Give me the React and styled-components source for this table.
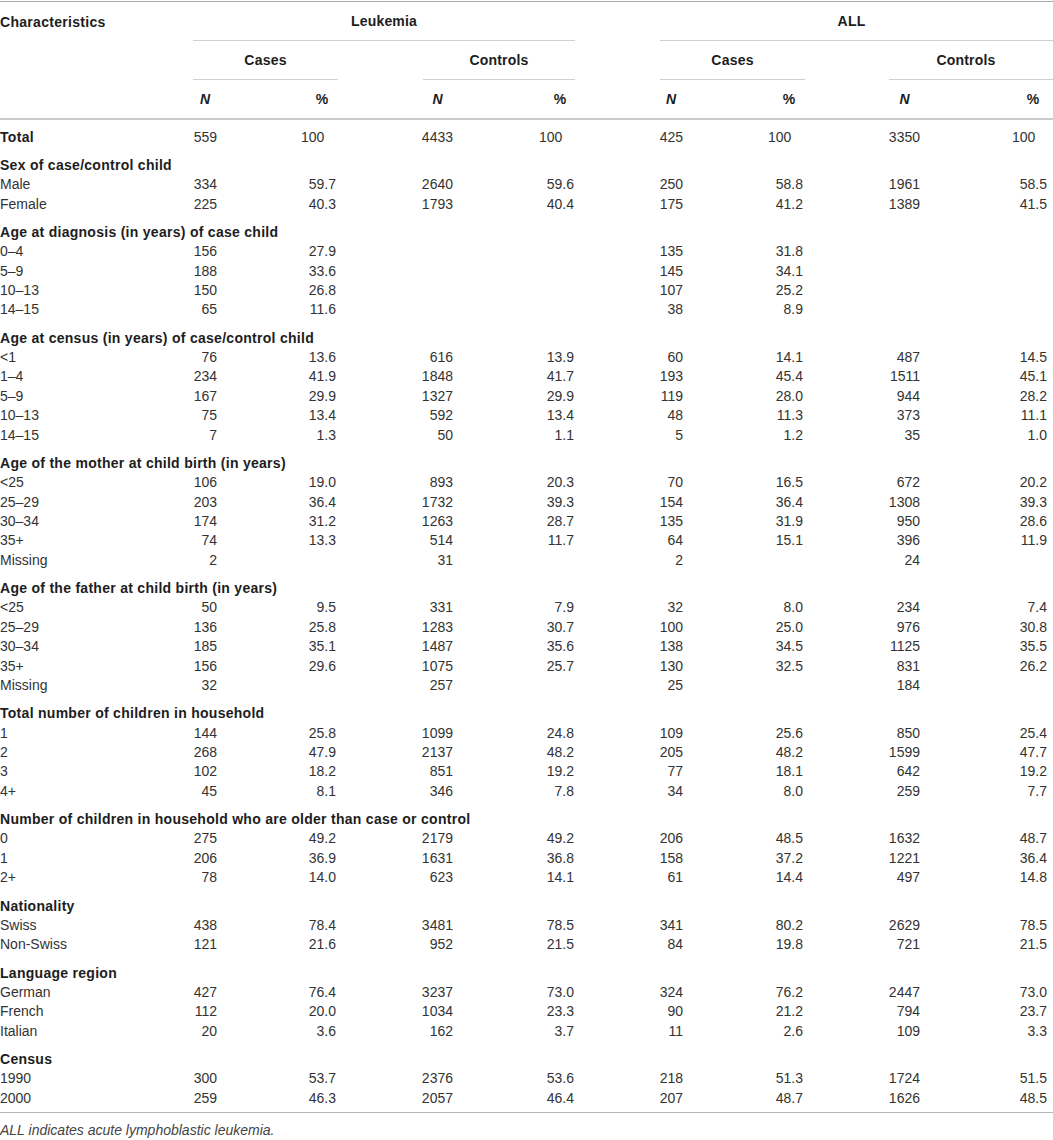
import React from "react";
import styled, { createGlobalStyle } from "styled-components";

const GlobalStyle = createGlobalStyle`
  html, body {
    margin: 0;
    padding: 0;
    background: #fff;
  }
  body {
    font-family: "Liberation Sans", Arial, Helvetica, sans-serif;
    color: #333;
  }
`;

// column widths, right padding of the numbers, and width of the number box
const COLS = [
  { w: 193 },
  { w: 72, pr: 48, box: 24 },
  { w: 73, pr: 2, box: 28 },
  { w: 162, pr: 47, box: 31 },
  { w: 75, pr: 1, box: 28 },
  { w: 145, pr: 37, box: 24 },
  { w: 85, pr: 2, box: 28 },
  { w: 155, pr: 40, box: 31 },
  { w: 93, pr: 6, box: 28 },
];

const TOP_GROUPS = [
  { label: "Leukemia", span: 4, inset: 0, tail: 0 },
  { label: "ALL", span: 4, inset: 85, tail: 10 },
];

const SUB_GROUPS = [
  { label: "Cases", span: 2, inset: 0, tail: 0 },
  { label: "Controls", span: 2, inset: 85, tail: 0 },
  { label: "Cases", span: 2, inset: 85, tail: 0 },
  { label: "Controls", span: 2, inset: 84, tail: 10 },
];

const TOTAL = ["Total", "559", "100", "4433", "100", "425", "100", "3350", "100"];

const SECTIONS = [
  {
    title: "Sex of case/control child",
    rows: [
      ["Male", "334", "59.7", "2640", "59.6", "250", "58.8", "1961", "58.5"],
      ["Female", "225", "40.3", "1793", "40.4", "175", "41.2", "1389", "41.5"],
    ],
  },
  {
    title: "Age at diagnosis (in years) of case child",
    rows: [
      ["0–4", "156", "27.9", "", "", "135", "31.8", "", ""],
      ["5–9", "188", "33.6", "", "", "145", "34.1", "", ""],
      ["10–13", "150", "26.8", "", "", "107", "25.2", "", ""],
      ["14–15", "65", "11.6", "", "", "38", "8.9", "", ""],
    ],
  },
  {
    title: "Age at census (in years) of case/control child",
    rows: [
      ["<1", "76", "13.6", "616", "13.9", "60", "14.1", "487", "14.5"],
      ["1–4", "234", "41.9", "1848", "41.7", "193", "45.4", "1511", "45.1"],
      ["5–9", "167", "29.9", "1327", "29.9", "119", "28.0", "944", "28.2"],
      ["10–13", "75", "13.4", "592", "13.4", "48", "11.3", "373", "11.1"],
      ["14–15", "7", "1.3", "50", "1.1", "5", "1.2", "35", "1.0"],
    ],
  },
  {
    title: "Age of the mother at child birth (in years)",
    rows: [
      ["<25", "106", "19.0", "893", "20.3", "70", "16.5", "672", "20.2"],
      ["25–29", "203", "36.4", "1732", "39.3", "154", "36.4", "1308", "39.3"],
      ["30–34", "174", "31.2", "1263", "28.7", "135", "31.9", "950", "28.6"],
      ["35+", "74", "13.3", "514", "11.7", "64", "15.1", "396", "11.9"],
      ["Missing", "2", "", "31", "", "2", "", "24", ""],
    ],
  },
  {
    title: "Age of the father at child birth (in years)",
    rows: [
      ["<25", "50", "9.5", "331", "7.9", "32", "8.0", "234", "7.4"],
      ["25–29", "136", "25.8", "1283", "30.7", "100", "25.0", "976", "30.8"],
      ["30–34", "185", "35.1", "1487", "35.6", "138", "34.5", "1125", "35.5"],
      ["35+", "156", "29.6", "1075", "25.7", "130", "32.5", "831", "26.2"],
      ["Missing", "32", "", "257", "", "25", "", "184", ""],
    ],
  },
  {
    title: "Total number of children in household",
    rows: [
      ["1", "144", "25.8", "1099", "24.8", "109", "25.6", "850", "25.4"],
      ["2", "268", "47.9", "2137", "48.2", "205", "48.2", "1599", "47.7"],
      ["3", "102", "18.2", "851", "19.2", "77", "18.1", "642", "19.2"],
      ["4+", "45", "8.1", "346", "7.8", "34", "8.0", "259", "7.7"],
    ],
  },
  {
    title: "Number of children in household who are older than case or control",
    rows: [
      ["0", "275", "49.2", "2179", "49.2", "206", "48.5", "1632", "48.7"],
      ["1", "206", "36.9", "1631", "36.8", "158", "37.2", "1221", "36.4"],
      ["2+", "78", "14.0", "623", "14.1", "61", "14.4", "497", "14.8"],
    ],
  },
  {
    title: "Nationality",
    rows: [
      ["Swiss", "438", "78.4", "3481", "78.5", "341", "80.2", "2629", "78.5"],
      ["Non-Swiss", "121", "21.6", "952", "21.5", "84", "19.8", "721", "21.5"],
    ],
  },
  {
    title: "Language region",
    rows: [
      ["German", "427", "76.4", "3237", "73.0", "324", "76.2", "2447", "73.0"],
      ["French", "112", "20.0", "1034", "23.3", "90", "21.2", "794", "23.7"],
      ["Italian", "20", "3.6", "162", "3.7", "11", "2.6", "109", "3.3"],
    ],
  },
  {
    title: "Census",
    rows: [
      ["1990", "300", "53.7", "2376", "53.6", "218", "51.3", "1724", "51.5"],
      ["2000", "259", "46.3", "2057", "46.4", "207", "48.7", "1626", "48.5"],
    ],
  },
];

function Value({ v, pct }) {
  if (pct && v && !v.includes(".")) return <Whole>{v}</Whole>;
  return v;
}

function DataRow({ row, bold, first, last }) {
  return (
    <tr>
      <Label $bold={bold} $first={first} $last={last}>
        {row[0]}
      </Label>
      {row.slice(1).map((v, i) => (
        <Num key={i} $pr={COLS[i + 1].pr} $first={first} $last={last}>
          <Value v={v} pct={i % 2 === 1} />
        </Num>
      ))}
    </tr>
  );
}

export default function App() {
  const lastSection = SECTIONS.length - 1;
  return (
    <Page>
      <GlobalStyle />
      <Table>
        <colgroup>
          {COLS.map((c, i) => (
            <Col key={i} $w={c.w} />
          ))}
        </colgroup>
        <thead>
          <tr>
            <CornerTh>Characteristics</CornerTh>
            {TOP_GROUPS.map((g) => (
              <GroupTh key={g.label} colSpan={g.span}>
                <Group $inset={g.inset} $tail={g.tail}>
                  {g.label}
                </Group>
              </GroupTh>
            ))}
          </tr>
          <tr>
            <CornerTh />
            {SUB_GROUPS.map((g, i) => (
              <GroupTh key={i} colSpan={g.span}>
                <Group $inset={g.inset} $tail={g.tail}>
                  {g.label}
                </Group>
              </GroupTh>
            ))}
          </tr>
          <tr>
            <StatTh />
            {COLS.slice(1).map((c, i) => (
              <StatTh key={i} $pr={c.pr}>
                <StatBox $w={c.box}>{i % 2 === 0 ? <Italic>N</Italic> : "%"}</StatBox>
              </StatTh>
            ))}
          </tr>
        </thead>
        <tbody>
          <DataRow row={TOTAL} bold first />
          {SECTIONS.map((s, si) => (
            <React.Fragment key={s.title}>
              <tr>
                <SectionTh colSpan={9}>{s.title}</SectionTh>
              </tr>
              {s.rows.map((r, ri) => (
                <DataRow
                  key={ri}
                  row={r}
                  last={si === lastSection && ri === s.rows.length - 1}
                />
              ))}
            </React.Fragment>
          ))}
        </tbody>
      </Table>
      <Note>ALL indicates acute lymphoblastic leukemia.</Note>
    </Page>
  );
}

const Page = styled.div`
  width: 1053px;
  padding-top: 1px;
  font-size: 14px;
`;

const Table = styled.table`
  width: 1053px;
  table-layout: fixed;
  border-collapse: separate;
  border-spacing: 0;
  border-top: 1px solid #a9a9a9;
`;

const Col = styled.col`
  width: ${(p) => p.$w}px;
`;

const CornerTh = styled.th`
  padding: 0;
  text-align: left;
  vertical-align: middle;
  font-weight: bold;
  letter-spacing: 0.3px;
  color: #1d1d1d;
`;

const GroupTh = styled.th`
  padding: 0;
  font-weight: bold;
  letter-spacing: 0.2px;
  color: #1d1d1d;
`;

const Group = styled.div`
  height: 38px;
  margin-left: ${(p) => p.$inset}px;
  padding-right: ${(p) => p.$tail}px;
  display: flex;
  align-items: center;
  justify-content: center;
  border-bottom: 1px solid #cfcfcf;
`;

const StatTh = styled.th`
  height: 38px;
  padding: 0 ${(p) => p.$pr || 0}px 0 0;
  text-align: right;
  font-weight: bold;
  color: #1d1d1d;
  border-bottom: 2px solid #cbcbcb;
`;

const StatBox = styled.span`
  display: inline-block;
  width: ${(p) => p.$w}px;
  text-align: center;
`;

const Italic = styled.i`
  font-style: italic;
`;

const Label = styled.td`
  padding: ${(p) => (p.$first ? "7.5px" : "0")} 0 ${(p) => (p.$last ? "4px" : "0")} 0;
  line-height: 19.4px;
  white-space: nowrap;
  font-weight: ${(p) => (p.$bold ? "bold" : "normal")};
  letter-spacing: ${(p) => (p.$bold ? "0.3px" : "0")};
  color: ${(p) => (p.$bold ? "#1d1d1d" : "#333")};
  border-bottom: ${(p) => (p.$last ? "1px solid #b5b5b5" : "none")};
`;

const Num = styled.td`
  padding: ${(p) => (p.$first ? "7.5px" : "0")} ${(p) => p.$pr}px
    ${(p) => (p.$last ? "4px" : "0")} 0;
  line-height: 19.4px;
  text-align: right;
  white-space: nowrap;
  color: #333;
  border-bottom: ${(p) => (p.$last ? "1px solid #b5b5b5" : "none")};
`;

const Whole = styled.span`
  padding-right: 0.834em;
`;

const SectionTh = styled.th`
  padding: 8.8px 0 0 0;
  line-height: 19.4px;
  text-align: left;
  font-weight: bold;
  letter-spacing: 0.28px;
  color: #1d1d1d;
  white-space: nowrap;
`;

const Note = styled.p`
  margin: 8px 0 0 0;
  line-height: 19.4px;
  font-style: italic;
  color: #444;
`;
